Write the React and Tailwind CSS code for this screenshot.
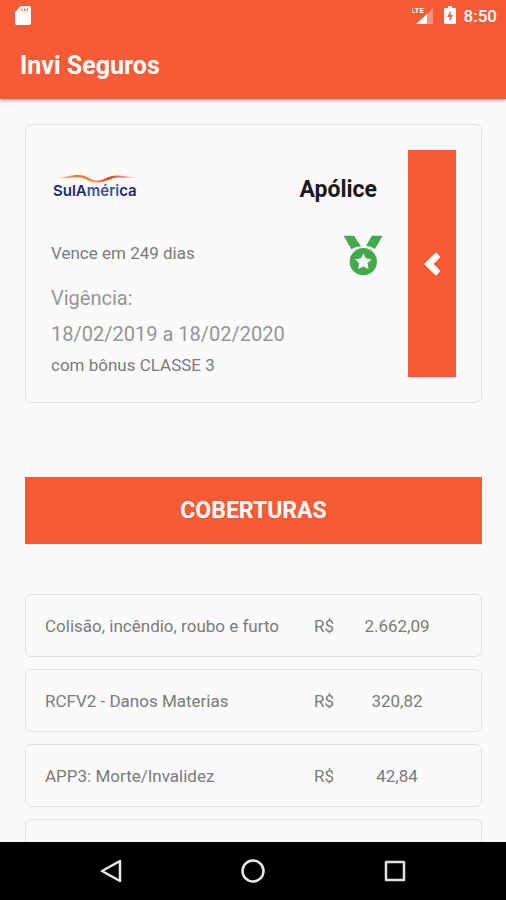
const coverages = [
  { label: "Colisão, incêndio, roubo e furto", currency: "R$", value: "2.662,09" },
  { label: "RCFV2 - Danos Materias", currency: "R$", value: "320,82" },
  { label: "APP3: Morte/Invalidez", currency: "R$", value: "42,84" },
  { label: "", currency: "", value: "" },
];

function StatusBar() {
  return (
    <div className="flex h-8 items-center justify-between pl-[15px] pr-[9px]">
      <svg className="h-5 w-4" viewBox="0 0 16 20" aria-hidden="true">
        <path d="M6 0h8q2 0 2 2v15q0 2-2 2H2q-2 0-2-2V6z" fill="#fff" />
        <path d="M7 2.500v2.500M9.700 2.500v2.500M12.400 2.500v2.500" stroke="#f75b36" strokeWidth="1.2" />
      </svg>
      <div className="flex items-center">
        <svg className="h-5 w-[22px]" viewBox="0 0 22 20" aria-hidden="true">
          <path d="M21 2v16H14V9z" fill="#fff" fillOpacity=".35" />
          <path d="M15 8v10H4z" fill="#fff" />
          <text x="-1" y="7" fontSize="8" fontWeight="700" fill="#fff">LTE</text>
        </svg>
        <svg className="ml-[10px] h-5 w-3" viewBox="0 0 12 20" aria-hidden="true">
          <path d="M4 0h4v2h3q1 0 1 1v14q0 1-1 1H1q-1 0-1-1V3q0-1 1-1h3z" fill="#fff" />
          <path d="M7 4.500L3 11h2.500v4.500L9 9H6.500z" fill="#f75b36" />
        </svg>
        <span className="ml-2 text-[17px] font-medium leading-5">8:50</span>
      </div>
    </div>
  );
}

function Logo() {
  return (
    <div className="flex flex-col pb-2 pl-[2px]">
      <svg className="ml-px h-[10px] w-[82px]" viewBox="0 0 82 10" aria-hidden="true">
        <defs>
          <linearGradient id="wave">
            <stop offset="0" stopColor="#f9b591" stopOpacity=".6" />
            <stop offset=".28" stopColor="#ef6f27" />
            <stop offset=".5" stopColor="#f6925e" />
            <stop offset=".68" stopColor="#e0431d" />
            <stop offset="1" stopColor="#f4a284" stopOpacity=".7" />
          </linearGradient>
        </defs>
        <path
          d="M0 4.500C12 5 15 2 24 2C34 2 36 7.500 43 7.500C50 7.500 54 2.500 63 2.500C70 2.500 74 4.500 82 4C74 5.500 70 4.300 64 4.500C56 5 52 9.500 43 9.500C34 9.500 32 4.600 24 4.200C17 4 12 6.200 0 4.500Z"
          fill="url(#wave)"
        />
      </svg>
      <span className="font-['Inter','Liberation_Sans',sans-serif] text-[15px] font-semibold leading-4 text-[#1b2a72]">
        SulA<span className="text-[#3f5290]">méri</span>ca
      </span>
    </div>
  );
}

function Medal() {
  return (
    <svg className="h-[41px] w-10" viewBox="188 344 120 123" role="img" aria-label="Bônus">
      <path d="M190 346H221L242 378Q224 379 213 387ZM307 346H275L257 376Q274 379 284 386Z" fill="#43a94a" />
      <circle cx="249" cy="424" r="41" fill="#43a94a" />
      <path
        d="M249 402L256 416L271 418L260 429L263 444L249 437L235 444L238 429L227 418L242 416Z"
        fill="#fafafa"
        stroke="#fafafa"
        strokeWidth="3"
        strokeLinejoin="round"
      />
    </svg>
  );
}

function PolicyCard() {
  return (
    <section className="flex gap-[25px] rounded-md border border-[#e2e2e2] p-[25px]">
      <div className="flex min-w-0 flex-1 flex-col text-[#7b7b7b]">
        <div className="flex h-20 items-center justify-between pr-[6px]">
          <Logo />
          <h2 className="text-[23px] font-bold leading-7 text-[#1a1a1a]">Apólice</h2>
        </div>
        <div className="flex h-[50px] items-center justify-between">
          <p className="pb-1 text-[17px] leading-6">Vence em 249 dias</p>
          <Medal />
        </div>
        <p className="text-xl leading-9 text-[#959595]">Vigência:</p>
        <p className="text-xl leading-9 text-[#959595]">18/02/2019 a 18/02/2020</p>
        <p className="mt-0.5 text-[17px] leading-[23px]">com bônus CLASSE 3</p>
      </div>
      <button type="button" aria-label="Voltar" className="flex w-12 items-center justify-center bg-[#f75b36]">
        <svg className="h-7 w-5" viewBox="0 0 20 28" aria-hidden="true">
          <path
            d="M14.500 3L17.800 6.300Q18.500 7 17.800 7.700L11.500 14L17.800 20.300Q18.500 21 17.800 21.700L14.500 25Q13.800 25.700 13.100 25L2.800 14.700Q2.100 14 2.800 13.300L13.100 3Q13.800 2.300 14.500 3Z"
            fill="#fff"
          />
        </svg>
      </button>
    </section>
  );
}

function Coverages() {
  return (
    <table className="mt-[50px] block w-full text-[17px] leading-6 text-[#7b7b7b]">
      <tbody className="flex flex-col gap-3">
        {coverages.map((c, i) => (
          <tr
            key={i}
            className="grid h-[63px] grid-cols-[1fr_39px_88px] items-center rounded-md border border-[#e2e2e2] pl-[19px] pr-10"
          >
            <td>{c.label}</td>
            <td>{c.currency}</td>
            <td className="text-center">{c.value}</td>
          </tr>
        ))}
      </tbody>
    </table>
  );
}

function NavigationBar() {
  return (
    <nav className="flex h-[58px] shrink-0 items-center justify-center gap-[118px] bg-black">
      <button type="button" aria-label="Voltar à tela anterior">
        <svg className="size-6" viewBox="0 0 24 24" fill="none" stroke="#e8e8e8" strokeWidth="2.500" strokeLinejoin="round">
          <path d="M21 2v20L3 12z" />
        </svg>
      </button>
      <button type="button" aria-label="Início">
        <svg className="size-6" viewBox="0 0 24 24" fill="none" stroke="#e8e8e8" strokeWidth="2.500">
          <circle cx="12" cy="12" r="10.500" />
        </svg>
      </button>
      <button type="button" aria-label="Aplicativos recentes">
        <svg className="size-6" viewBox="0 0 24 24" fill="none" stroke="#e0e0e0" strokeWidth="2.500" strokeLinejoin="round">
          <path d="M3 3h18v18H3z" />
        </svg>
      </button>
    </nav>
  );
}

export default function App() {
  return (
    <div className="flex h-screen flex-col bg-[#fafafa] font-['Roboto',sans-serif]">
      <header className="relative shrink-0 bg-[#f75b36] text-white shadow-[0_1px_4px_rgba(0,0,0,0.45)]">
        <StatusBar />
        <h1 className="px-5 py-[18px] text-[25px] font-bold leading-[31px]">Invi Seguros</h1>
      </header>
      <main className="min-h-0 flex-1 overflow-hidden pl-[25px] pr-6 pt-[25px]">
        <PolicyCard />
        <h2 className="mt-[74px] bg-[#f75b36] py-5 text-center text-[23px] font-bold leading-[27px] text-white">
          COBERTURAS
        </h2>
        <Coverages />
      </main>
      <NavigationBar />
    </div>
  );
}
